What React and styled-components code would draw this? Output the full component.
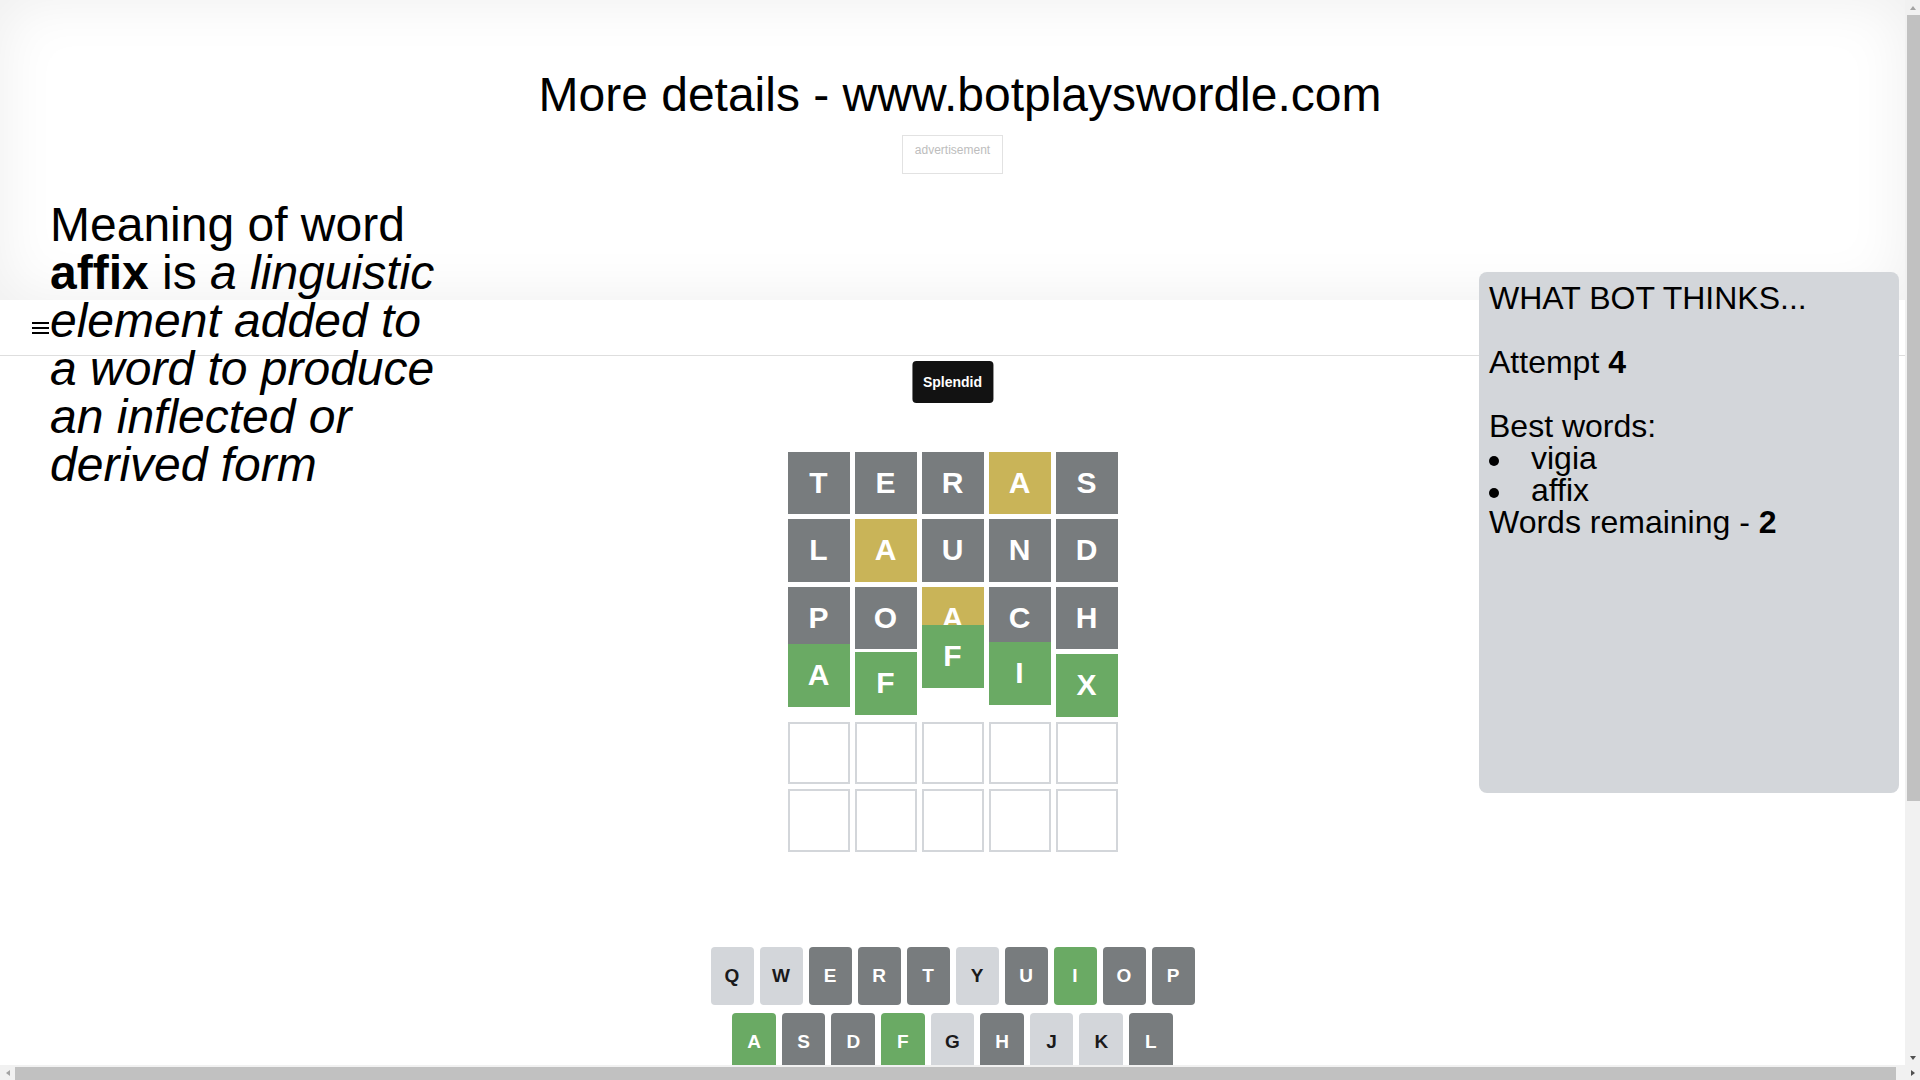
import React from 'react';
import styled, { createGlobalStyle } from 'styled-components';

const GlobalStyle = createGlobalStyle`
  html,
  body {
    margin: 0;
    padding: 0;
    overflow: hidden;
  }

  body {
    font-family: 'Liberation Sans', Arial, Helvetica, sans-serif;
    color: #000;
    background: #fff;
  }

  *,
  *::before,
  *::after {
    box-sizing: border-box;
  }
`;

const color = {
  correct: '#6aaa64',
  present: '#c9b458',
  absent: '#787c7e',
  key: '#d3d6da',
  empty: '#d3d6da',
  ink: '#1a1a1b',
};

// browser window: page on the left, classic scrollbars right and bottom
const Frame = styled.div`
  display: grid;
  grid-template-columns: 1fr 15px;
  grid-template-rows: 1fr 15px;
  width: 100vw;
  height: 100vh;
`;

const Content = styled.div`
  position: relative;
  overflow: hidden;
`;

const VScroll = styled.div`
  display: flex;
  flex-direction: column;
  background: #f1f1f1;
`;

const HScroll = styled.div`
  grid-column: 1 / -1;
  display: flex;
  background: #f1f1f1;
`;

const arrowShapes = {
  up: c => `border-width: 0 3.5px 4px; border-color: transparent transparent ${c};`,
  down: c => `border-width: 4px 3.5px 0; border-color: ${c} transparent transparent;`,
  left: c => `border-width: 3.5px 4px 3.5px 0; border-color: transparent ${c} transparent transparent;`,
  right: c => `border-width: 3.5px 0 3.5px 4px; border-color: transparent transparent transparent ${c};`,
};

const ScrollArrow = styled.div`
  flex: none;
  display: flex;
  align-items: center;
  justify-content: center;
  width: 15px;
  height: 15px;

  &::before {
    content: '';
    border-style: solid;
    ${p => arrowShapes[p.$dir](p.$off ? '#a3a3a3' : '#505050')}
  }
`;

const VThumb = styled.div`
  flex: none;
  height: 786px;
  margin-left: 2px;
  background: #c1c1c1;
`;

const HThumb = styled.div`
  flex: none;
  width: 1881px;
  margin-top: 2px;
  background: #c1c1c1;
`;

const Track = styled.div`
  flex: 1;
`;

const Page = styled.div`
  position: relative;
`;

const AdBanner = styled.section`
  height: 300px;
  padding-top: 71px;
  box-shadow: inset 0 0 60px rgba(0, 0, 0, 0.07);
`;

const Headline = styled.h1`
  width: 100vw;
  margin: 0;
  font-size: 48px;
  line-height: 48px;
  font-weight: 400;
  text-align: center;
`;

const AdSlot = styled.div`
  width: fit-content;
  margin: 16px auto 0;
  padding: 7px 12px 16px;
  border: 1px solid #e2e2e2;
  font-size: 12px;
  line-height: 14px;
  color: #bdbdbd;
`;

const AppShell = styled.main`
  min-height: 1102px;
`;

const Header = styled.header`
  display: flex;
  align-items: center;
  height: 56px;
  padding-left: 32px;
  border-bottom: 1px solid #dedede;
`;

const MenuButton = styled.button`
  display: flex;
  padding: 0;
  border: none;
  background: transparent;
  color: #000;
  cursor: pointer;
`;

const Game = styled.div`
  display: flex;
  flex-direction: column;
  width: 100%;
  max-width: 500px;
  height: 791px;
  margin: 0 auto;
`;

const BoardArea = styled.div`
  position: relative;
  flex: 1;
  display: flex;
  align-items: center;
  justify-content: center;
`;

const Toast = styled.div`
  position: absolute;
  top: 5px;
  left: 50%;
  transform: translateX(-50%);
  z-index: 3;
  padding: 13px 11px;
  border-radius: 4px;
  background: #121212;
  color: #fff;
  font-size: 14px;
  line-height: 16px;
  font-weight: 700;
`;

const Board = styled.div`
  display: grid;
  grid-template-rows: repeat(6, 1fr);
  gap: 5px;
  width: 330px;
  height: 400px;
`;

const BoardRow = styled.div`
  display: grid;
  grid-template-columns: repeat(5, 1fr);
  gap: 5px;
`;

const tileFill = {
  correct: color.correct,
  present: color.present,
  absent: color.absent,
};

const Tile = styled.div`
  display: flex;
  align-items: center;
  justify-content: center;
  font-size: 30px;
  line-height: 1;
  font-weight: 700;
  text-transform: uppercase;
  color: #fff;
  background: ${p => tileFill[p.$state] || '#fff'};
  border: ${p => (p.$state ? 'none' : `2px solid ${color.empty}`)};
  ${p => p.$shift && `transform: translateY(${p.$shift}px);`}
`;

const Keyboard = styled.div`
  height: 200px;
  margin: 0 8px;
  user-select: none;
`;

const KeyRow = styled.div`
  display: flex;
  width: 100%;
  margin: 0 auto 8px;
`;

const keyFill = {
  correct: [color.correct, '#fff'],
  present: [color.present, '#fff'],
  absent: [color.absent, '#fff'],
};

const Key = styled.button`
  flex: ${p => (p.$wide ? 1.5 : 1)};
  display: flex;
  align-items: center;
  justify-content: center;
  height: 58px;
  margin: 0 6px 0 0;
  padding: 0;
  border: 0;
  border-radius: 4px;
  font-family: inherit;
  font-size: ${p => (p.$wide ? '12px' : '19px')};
  font-weight: 700;
  text-transform: uppercase;
  background: ${p => (keyFill[p.$state] || [color.key])[0]};
  color: ${p => (keyFill[p.$state] || [color.key, color.ink])[1]};
  cursor: pointer;

  &:last-of-type {
    margin: 0;
  }
`;

const HalfSpacer = styled.div`
  flex: 0.5;
`;

const Meaning = styled.p`
  position: absolute;
  top: 201px;
  left: 50px;
  z-index: 2;
  width: 395px;
  margin: 0;
  font-size: 48px;
  line-height: 48px;
`;

const BotPanel = styled.aside`
  position: absolute;
  top: 272px;
  right: 6px;
  z-index: 2;
  width: 420px;
  height: 521px;
  padding: 10px 10px;
  border-radius: 8px;
  background: #d3d6da;
  font-size: 32px;
  line-height: 32px;
`;

const PanelLine = styled.div`
  margin-top: ${p => (p.$spaced ? '32px' : '0')};
`;

const WordList = styled.ul`
  margin: 0;
  padding: 0;
  list-style: none;
`;

const WordItem = styled.li`
  &::before {
    content: '';
    display: inline-block;
    width: 10px;
    height: 10px;
    margin-right: 32px;
    border-radius: 50%;
    background: #000;
    vertical-align: 3px;
  }
`;

const guesses = [
  { word: 'teras', states: ['absent', 'absent', 'absent', 'present', 'absent'] },
  { word: 'laund', states: ['absent', 'present', 'absent', 'absent', 'absent'] },
  { word: 'poach', states: ['absent', 'absent', 'present', 'absent', 'absent'] },
  {
    word: 'affix',
    states: ['correct', 'correct', 'correct', 'correct', 'correct'],
    bounce: [-10, -2, -29, -12, 0],
  },
];

const keyStates = {
  t: 'absent', e: 'absent', r: 'absent', s: 'absent', l: 'absent', u: 'absent',
  n: 'absent', d: 'absent', p: 'absent', o: 'absent', c: 'absent', h: 'absent',
  a: 'correct', f: 'correct', i: 'correct', x: 'correct',
};

function MenuIcon() {
  return (
    <svg width="17" height="12" viewBox="0 0 17 12" fill="currentColor" aria-hidden="true">
      <rect x="0" y="0" width="17" height="2" />
      <rect x="0" y="5" width="17" height="2" />
      <rect x="0" y="10" width="17" height="2" />
    </svg>
  );
}

function BackspaceIcon() {
  return (
    <svg width="24" height="24" viewBox="0 0 24 24" fill="currentColor" aria-hidden="true">
      <path d="M22 3H7c-.69 0-1.23.35-1.59.88L0 12l5.41 8.11c.36.53.9.89 1.59.89h15c1.1 0 2-.9 2-2V5c0-1.1-.9-2-2-2zm0 16H7.07L2.4 12l4.66-7H22v14zm-11.59-2L14 13.41 17.59 17 19 15.59 15.41 12 19 8.41 17.59 7 14 10.59 10.41 7 9 8.41 12.59 12 9 15.59z" />
    </svg>
  );
}

function GameBoard() {
  const rows = [...guesses];
  while (rows.length < 6) rows.push({ word: '     ', states: [] });

  return (
    <Board>
      {rows.map((row, r) => (
        <BoardRow key={r}>
          {row.word.split('').map((ch, c) => (
            <Tile key={c} $state={row.states[c]} $shift={row.bounce && row.bounce[c]}>
              {ch.trim()}
            </Tile>
          ))}
        </BoardRow>
      ))}
    </Board>
  );
}

function Keys({ letters }) {
  return letters.split('').map(ch => (
    <Key key={ch} type="button" $state={keyStates[ch]}>
      {ch}
    </Key>
  ));
}

export default function App() {
  return (
    <Frame>
      <GlobalStyle />
      <Content>
        <Page>
          <AdBanner>
            <Headline>More details - www.botplayswordle.com</Headline>
            <AdSlot>advertisement</AdSlot>
          </AdBanner>

          <AppShell>
            <Header>
              <MenuButton type="button" aria-label="menu">
                <MenuIcon />
              </MenuButton>
            </Header>

            <Game>
              <BoardArea>
                <Toast>Splendid</Toast>
                <GameBoard />
              </BoardArea>

              <Keyboard>
                <KeyRow>
                  <Keys letters="qwertyuiop" />
                </KeyRow>
                <KeyRow>
                  <HalfSpacer />
                  <Keys letters="asdfghjkl" />
                  <HalfSpacer />
                </KeyRow>
                <KeyRow>
                  <Key type="button" $wide>enter</Key>
                  <Keys letters="zxcvbnm" />
                  <Key type="button" $wide aria-label="backspace">
                    <BackspaceIcon />
                  </Key>
                </KeyRow>
              </Keyboard>
            </Game>
          </AppShell>

          <Meaning>
            Meaning of word <b>affix</b> is{' '}
            <i>a linguistic element added to a word to produce an inflected or derived form</i>
          </Meaning>

          <BotPanel>
            <PanelLine>WHAT BOT THINKS...</PanelLine>
            <PanelLine $spaced>
              Attempt <b>4</b>
            </PanelLine>
            <PanelLine $spaced>Best words:</PanelLine>
            <WordList>
              {['vigia', 'affix'].map(w => (
                <WordItem key={w}>{w}</WordItem>
              ))}
            </WordList>
            <PanelLine>
              Words remaining - <b>2</b>
            </PanelLine>
          </BotPanel>
        </Page>
      </Content>

      <VScroll>
        <ScrollArrow $dir="up" $off />
        <VThumb />
        <Track />
        <ScrollArrow $dir="down" />
      </VScroll>

      <HScroll>
        <ScrollArrow $dir="left" $off />
        <HThumb />
        <Track />
        <ScrollArrow $dir="right" />
      </HScroll>
    </Frame>
  );
}
